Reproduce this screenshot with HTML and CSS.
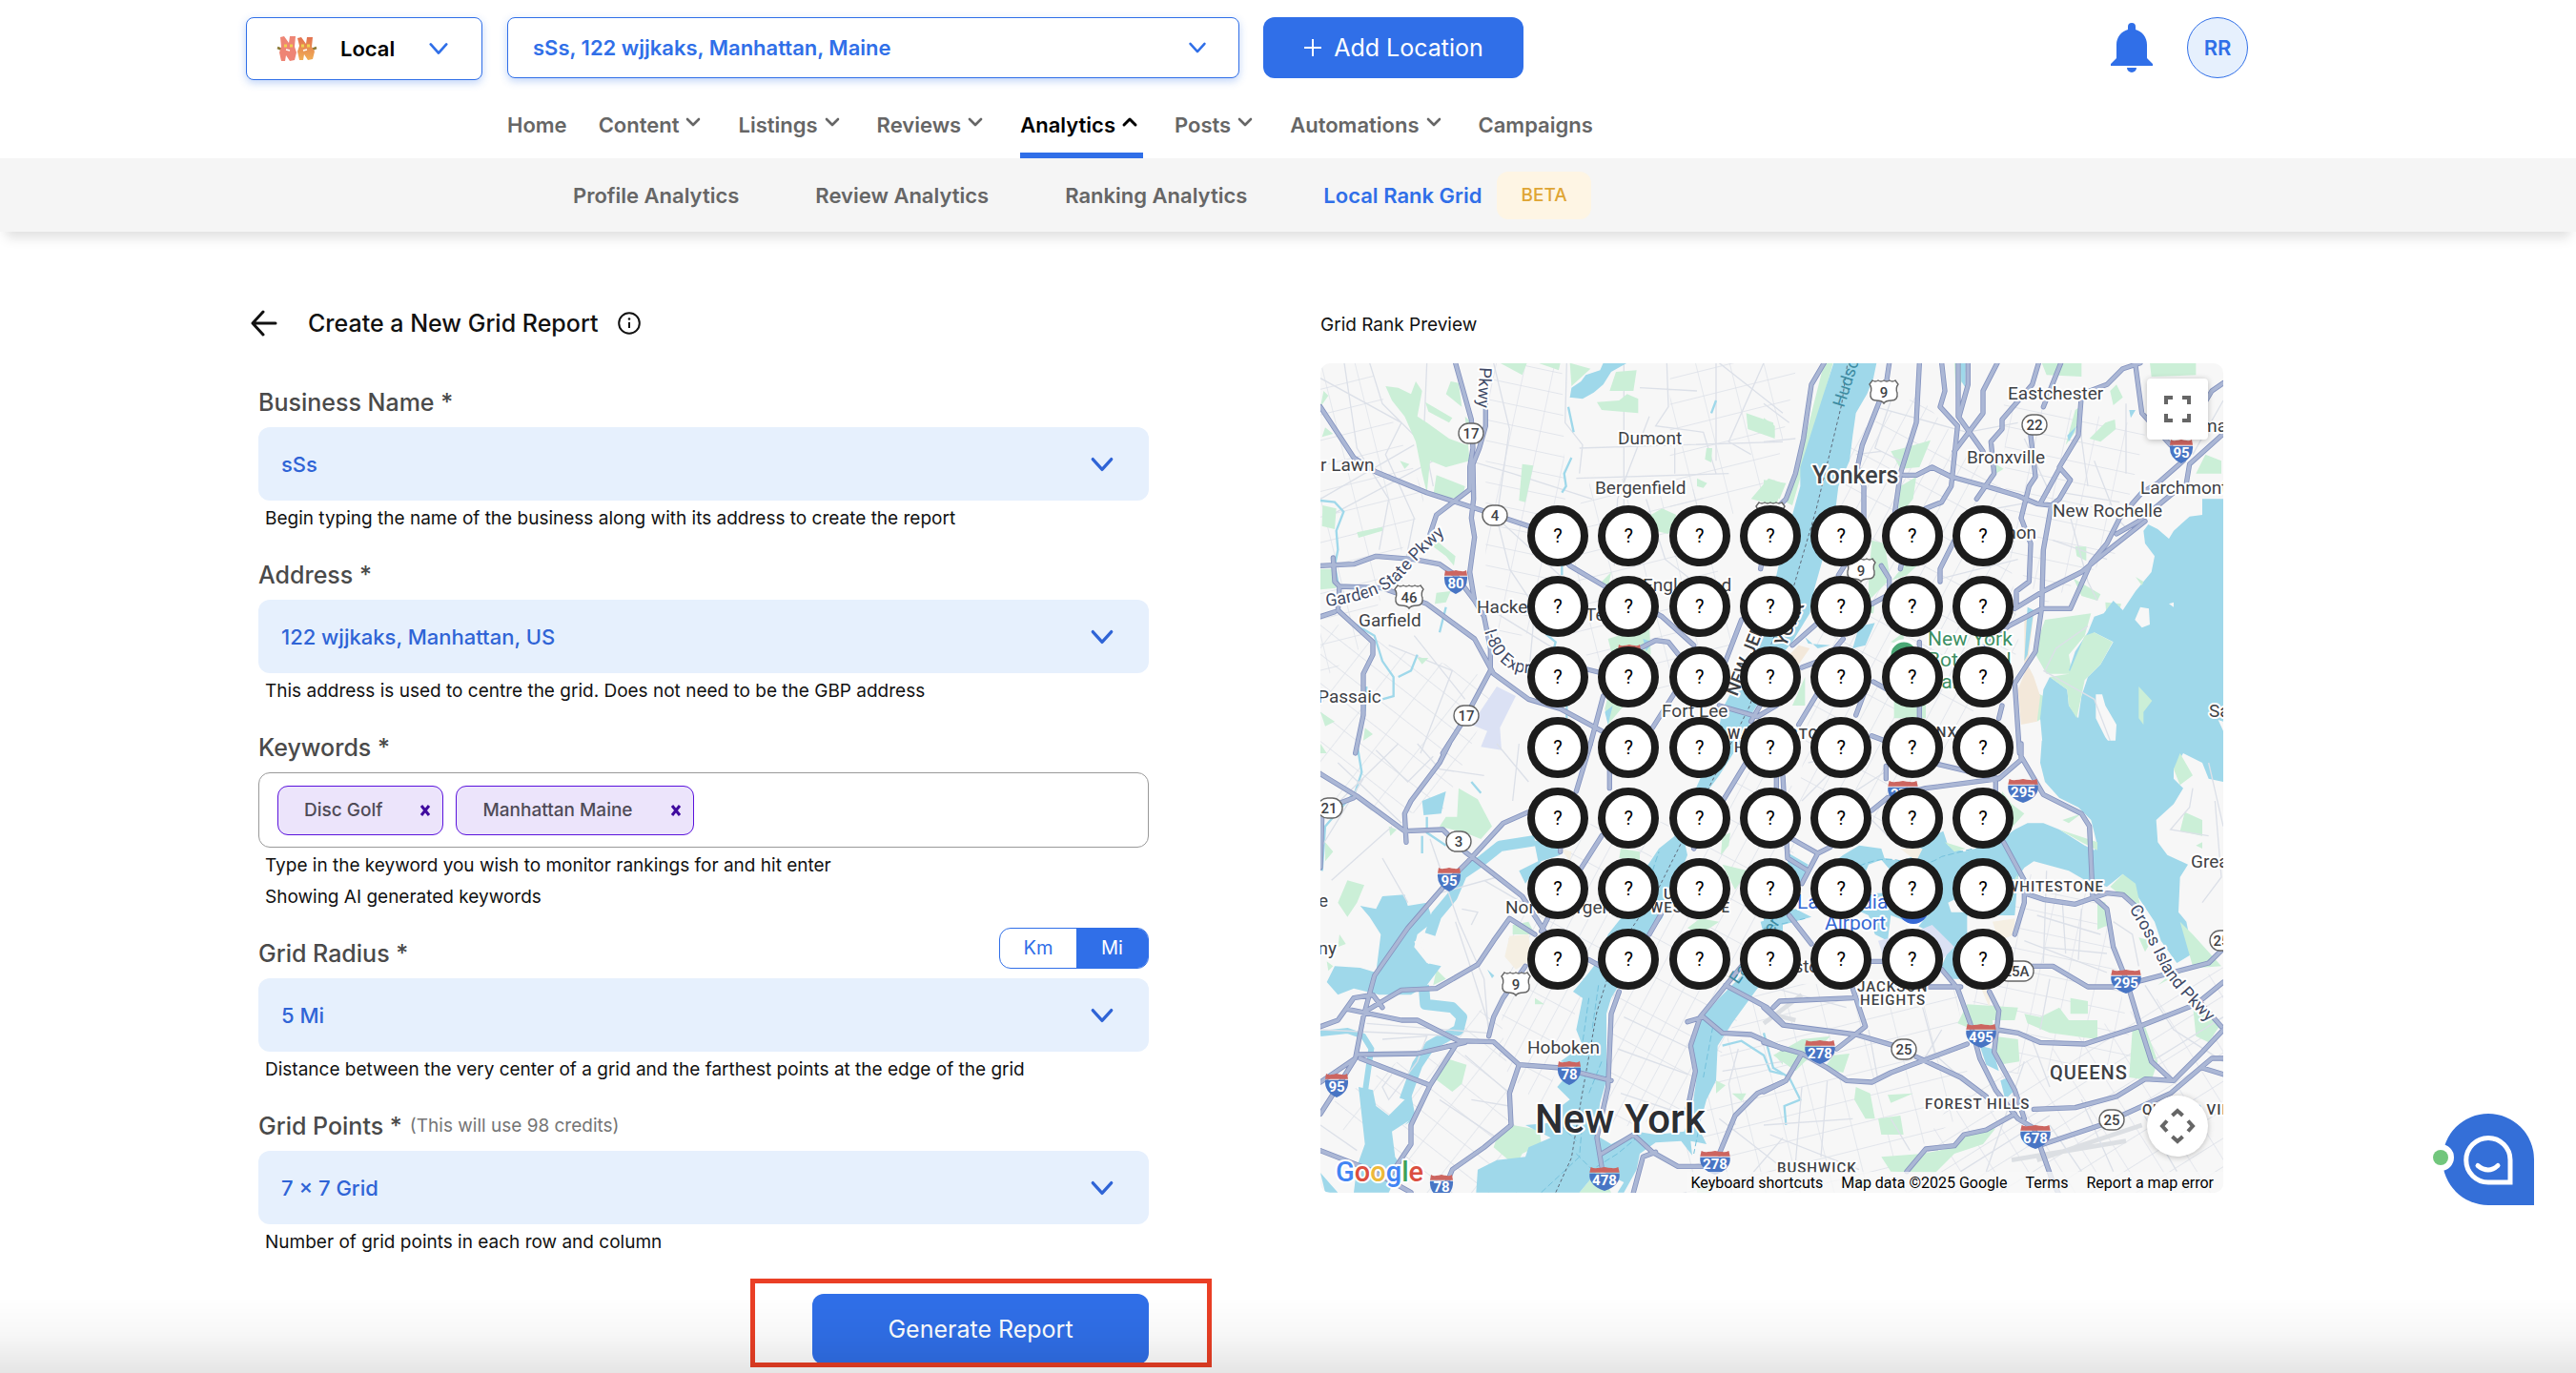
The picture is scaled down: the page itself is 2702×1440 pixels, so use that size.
FILE: index.html
```html
<!DOCTYPE html>
<html lang="en">
<head>
<meta charset="utf-8">
<meta name="viewport" content="width=device-width, initial-scale=1">
<title>Local Rank Grid</title>
<link rel="stylesheet" href="styles.css">
</head>
<body>
<svg class="defs" aria-hidden="true">
  <defs>
    <symbol id="chev" viewBox="0 0 24 24"><path d="M3 7l9 10 9-10" fill="none" stroke="currentColor" stroke-width="3" stroke-linecap="round" stroke-linejoin="round"/></symbol>
    <symbol id="mini" viewBox="0 0 27 27"><path d="M7 8l6 6 6-6" fill="none" stroke="currentColor" stroke-width="2.6" stroke-linecap="round" stroke-linejoin="round"/></symbol>
    <symbol id="mini-up" viewBox="0 0 27 27"><path d="M7 14l6-6 6 6" fill="none" stroke="currentColor" stroke-width="3" stroke-linecap="round" stroke-linejoin="round"/></symbol>
  </defs>
</svg>

<header class="top">
  <div class="top-row">
    <button class="workspace" type="button">
      <svg width="43" height="26" viewBox="0 0 43 26" aria-hidden="true">
        <defs><linearGradient id="fur" x1="0" y1="0" x2="0" y2="1"><stop offset="0" stop-color="#e2714f"/><stop offset="1" stop-color="#f0ae55"/></linearGradient></defs>
        <path d="M1 12l5 2M42 12l-5 2" stroke="#8b7a35" stroke-width="2.5"/>
        <path d="M4 1l4-1 5 7 1-7h6l-1 11 2 6-2 8-5 1-4-6-1 6-4 0-2-9 2-6z" fill="#ee8575"/>
        <path d="M22 2l4-1 5 7 1-7h6l-1 10 3 5-2 8-5 1-4-6-1 6-4 0-2-9 2-6z" fill="url(#fur)"/>
        <path d="M8 10h3m3 0h3m9 0h3m3 0h3" stroke="#efd24f" stroke-width="3"/>
        <path d="M10 14l4 1m14 0l4-1" stroke="#fff" stroke-width="1.5"/>
      </svg>
      <span>Local</span>
      <svg class="chev" width="22" height="22"><use href="#chev"/></svg>
    </button>
    <label class="location">
      <span class="sr">Location</span>
      <select><option>sSs, 122 wjjkaks, Manhattan, Maine</option></select>
      <svg class="chev" width="20" height="20"><use href="#chev"/></svg>
    </label>
    <button class="primary add" type="button"><svg width="20" height="20" viewBox="0 0 20 20" aria-hidden="true"><path d="M10 1v18M1 10h18" stroke="#fff" stroke-width="2"/></svg>Add Location</button>
    <button class="bell" type="button" aria-label="Notifications">
      <svg width="44" height="54" viewBox="0 0 44 54"><path d="M22 0a4 4 0 0 1 4 4v3c7 2 12 8 12 16v14l6 6v2H0v-2l6-6V23C6 15 11 9 18 7V4a4 4 0 0 1 4-4zM17 47h10a5 5 0 0 1-10 0z" fill="#306fe8"/></svg>
    </button>
    <button class="avatar" type="button">RR</button>
  </div>
  <nav class="main-nav" aria-label="Main">
    <a href="#">Home</a>
    <a href="#">Content<svg width="27" height="27"><use href="#mini"/></svg></a>
    <a href="#">Listings<svg width="27" height="27"><use href="#mini"/></svg></a>
    <a href="#">Reviews<svg width="27" height="27"><use href="#mini"/></svg></a>
    <a href="#" class="active">Analytics<svg width="27" height="27"><use href="#mini-up"/></svg></a>
    <a href="#">Posts<svg width="27" height="27"><use href="#mini"/></svg></a>
    <a href="#">Automations<svg width="27" height="27"><use href="#mini"/></svg></a>
    <a href="#">Campaigns</a>
  </nav>
</header>
<nav class="sub-nav" aria-label="Analytics">
  <a href="#">Profile Analytics</a>
  <a href="#">Review Analytics</a>
  <a href="#">Ranking Analytics</a>
  <a href="#" class="active">Local Rank Grid<span class="beta">BETA</span></a>
</nav>

<main class="content">
  <form class="report">
    <div class="report-head">
      <button type="button" class="icon-btn" aria-label="Back"><svg width="28" height="28" viewBox="0 0 28 28"><path d="M26 14H3M13 2L2 14l11 12" fill="none" stroke="#111" stroke-width="3" stroke-linecap="round" stroke-linejoin="round"/></svg></button>
      <h1>Create a New Grid Report</h1>
      <svg width="24" height="24" viewBox="0 0 24 24" aria-hidden="true"><circle cx="12" cy="12" r="10.8" fill="none" stroke="#111" stroke-width="2"/><path d="M12 11v6" stroke="#111" stroke-width="2"/><circle cx="12" cy="7.5" r="1.3" fill="#111"/></svg>
    </div>
    <div class="fields">
      <div class="field">
        <div class="label-row"><label for="business">Business Name *</label></div>
        <div class="select"><select id="business"><option>sSs</option></select><svg class="chev" width="26" height="26"><use href="#chev"/></svg></div>
        <p class="hint">Begin typing the name of the business along with its address to create the report</p>
      </div>
      <div class="field">
        <div class="label-row"><label for="address">Address *</label></div>
        <div class="select"><select id="address"><option>122 wjjkaks, Manhattan, US</option></select><svg class="chev" width="26" height="26"><use href="#chev"/></svg></div>
        <p class="hint">This address is used to centre the grid. Does not need to be the GBP address</p>
      </div>
      <div class="field">
        <div class="label-row"><label for="keywords">Keywords *</label></div>
        <div class="tags">
          <span class="tag">Disc Golf<button type="button" aria-label="Remove Disc Golf"><svg width="12" height="12" viewBox="0 0 12 12"><path d="M2 1l8 10M10 1L2 11" stroke="#3f0a9e" stroke-width="3"/></svg></button></span>
          <span class="tag">Manhattan Maine<button type="button" aria-label="Remove Manhattan Maine"><svg width="12" height="12" viewBox="0 0 12 12"><path d="M2 1l8 10M10 1L2 11" stroke="#3f0a9e" stroke-width="3"/></svg></button></span>
          <input id="keywords" type="text">
        </div>
        <p class="hint">Type in the keyword you wish to monitor rankings for and hit enter</p>
        <p class="hint">Showing AI generated keywords</p>
      </div>
      <div class="field">
        <div class="label-row">
          <label for="radius">Grid Radius *</label>
          <div class="units">
            <label><input type="radio" name="unit"><span>Km</span></label>
            <label><input type="radio" name="unit" checked><span>Mi</span></label>
          </div>
        </div>
        <div class="select"><select id="radius"><option>5 Mi</option></select><svg class="chev" width="26" height="26"><use href="#chev"/></svg></div>
        <p class="hint">Distance between the very center of a grid and the farthest points at the edge of the grid</p>
      </div>
      <div class="field">
        <div class="label-row"><label for="points">Grid Points *</label><span class="credits">(This will use 98 credits)</span></div>
        <div class="select"><select id="points"><option>7 × 7 Grid</option></select><svg class="chev" width="26" height="26"><use href="#chev"/></svg></div>
        <p class="hint">Number of grid points in each row and column</p>
      </div>
    </div>
    <div class="submit"><button class="primary generate" type="submit">Generate Report</button></div>
  </form>

  <section class="preview">
    <h2>Grid Rank Preview</h2>
    <div class="map">
      <svg class="layer" viewBox="0 0 2841 2610" preserveAspectRatio="xMidYMid slice" aria-hidden="true">
        <defs>
          <pattern id="s1" width="90" height="64" patternUnits="userSpaceOnUse" patternTransform="rotate(12)"><path d="M0 0H90M0 0V64" class="street"/></pattern>
          <pattern id="s2" width="46" height="110" patternUnits="userSpaceOnUse" patternTransform="rotate(28)"><path d="M0 0H46M0 0V110" class="street"/></pattern>
          <pattern id="s3" width="110" height="72" patternUnits="userSpaceOnUse" patternTransform="rotate(38)"><path d="M0 0H110M0 0V72" class="street"/></pattern>
          <pattern id="s4" width="104" height="78" patternUnits="userSpaceOnUse" patternTransform="rotate(-14)"><path d="M0 0H104M0 0V78" class="street"/></pattern>
          <pattern id="s5" width="90" height="76" patternUnits="userSpaceOnUse" patternTransform="rotate(-32)"><path d="M0 0H90M0 0V76" class="street"/></pattern>
          <g id="roads">
            <g transform="translate(-45 -213)"><path d="M45 350L150 510 220 555 380 620 550 675 700 725 830 850 940 915 1120 1010 1220 1100M470 212L520 390 525 480 515 540 515 610 410 690 390 750M565 340V410L545 480 525 530 527 640 520 700 530 760 515 870 530 960 560 1010 580 1110V1180L500 1330 430 1440M45 850L150 845 220 820 340 830 420 845 470 880 530 960M85 825L90 900 105 915 240 920 380 970 530 1080 590 1190 700 1270 800 1300 930 1370M105 915L100 990 210 1090V1130L180 1190V1320L155 1440M45 1010L90 995M895 1410L935 1260M860 1170L920 1185M1050 1110L1100 1085 1140 1090 1180 1140M1320 1150L1370 1020M1090 1360L1160 1250M1300 1290L1420 1325 1480 1290M1400 1340L1480 1200"/></g>
            <g transform="translate(1395 -213)"><path d="M190 212L150 280 125 450 100 560 70 640 20 690-10 860M395 212L385 280 310 470 295 540 315 600V700M490 212L480 400 430 560 410 700M430 860L450 770M560 212L570 300 555 350 610 410 590 600 560 650 510 670M612 212V380L690 490M643 212V280L615 380M735 212L690 300V370L600 490M865 212L845 280 750 390V420L715 460 725 560 670 640M935 212L880 350M840 440L855 570 835 600 810 700 840 780 835 900 795 930V980M440 565H480L530 540 590 570 700 600 800 630 860 655 905 660M1185 212L1130 230 1080 280 1000 310 990 440 930 540 965 580 930 640 905 660 880 800 875 980 855 1120 790 1220 805 1440M930 545L870 655M1170 220L1190 370 1280 470M1446 275L1410 300 1380 350M1446 435L1340 530 1330 590M1320 520L1240 590 1190 620 1120 700 1080 780 1030 840 965 985H875L770 1040 700 1100M1290 620L1180 710 1110 750M1200 710L1060 820 1000 870 880 930 790 985M370 850L395 890V940L340 970M235 880L260 840M600 770L555 860V900M170 1030L90 1100M250 1080L200 1140 120 1170M170 1250L110 1350M320 1240L290 1320M345 1215L390 1240M340 1385L380 1400M740 1330L750 1290M490 1090V1330"/></g>
            <g transform="translate(-45 1197)"><path d="M45 95L160 165 310 275 430 270 500 340 590 410 680 480 750 590M450 0L420 60 330 180 310 220 315 310M700 215L620 250 510 370 450 430 320 580 215 730 180 860 155 990 80 1110 45 1165M155 990L45 1065M110 185L150 170M45 390L50 230M45 890L100 870 150 800 210 790 240 830M190 840L300 775 410 770 540 695 590 620 640 550 720 600M130 835L300 870H350L480 935 590 938 670 1010 800 1020 960 1060M160 978L350 975 500 940M170 990L390 1075 470 950M390 1075L330 1200V1260L270 1350M45 1280L200 1340 330 1412M690 700L620 800 590 860 575 920M670 1010L640 1100 645 1200 560 1270 460 1340 430 1412M890 680L980 730M985 780L960 850 950 1080 915 1240 930 1330M740 590L800 470M800 340V260M850 150L895 0M930 290L860 400M955 80V140M1080 600L1160 460M1220 330L1390 50M930 1290L1030 1230 1090 1285 1170 1330H1250M1030 1412L1060 1300 1100 1285M1300 1290L1350 1170 1420 1100 1500 1065M1370 700L1240 860 1210 950 1225 1030 1200 1150M1200 875L1250 860 1310 910 1400 915 1500 960M1320 760L1450 830 1500 880"/></g>
            <g transform="translate(1395 1197)"><path d="M0 940L120 975 200 1020 260 1060 340 1065 400 1035 640 945M120 975L70 1060 0 1095M0 830L60 885 290 915 410 950M30 830L50 810 280 800M280 770L320 890 230 960M80 540L150 630M60 100L75 360 140 400M40 100V140M90 300L170 345 210 325M170 345L120 440M340 210L390 170 510 140 740 110 810 50V0M550 65L740 110M810 40L880 160 1000 220 1025 260 1035 480 1080 520 1100 640 1140 740 1185 890 1220 1000 1280 1055M730 120V160M755 310L820 430V500L790 600M820 470L880 490 980 505 1080 470 1130 475 1180 520M840 700H910L1020 765H1100L1190 745 1400 690 1446 645M340 685H380M560 710L610 770 650 880 680 990 730 1090 800 1180 850 1210 910 1380 930 1420M710 780L740 840 725 970 790 1090 820 1180M520 765H620M735 900L800 910 870 940 1010 945 1180 890 1360 820 1446 750M1370 810L1440 890M1446 900L1380 970 1290 1060 1200 1055 1110 1110 980 1145 850 1150M1446 990H1410L1280 1100 1060 1200 880 1260M1380 1020L1446 1040M480 985L620 1050 700 1110M790 1165L700 1215 630 1230 600 1265 510 1275 450 1346M385 70V110"/></g>
          </g>
        </defs>
        <rect width="2841" height="2610" fill="#f7f7f7"/>
        <!-- local street grids -->
        <path d="M0 0H150L330 420 120 900 0 1000zM1100 0L1500 0 1420 420 1100 560z" fill="url(#s4)"/>
        <path d="M0 800L250 900 560 1000 380 1420 0 1400zM0 2350L560 2000 640 2610H300z" fill="url(#s3)"/>
        <path d="M520 0L760 0 780 800 520 900z" fill="url(#s1)"/>
        <path d="M860 350L1200 400 1300 900 950 1100 700 700z" fill="url(#s4)"/>
        <path d="M1380 1200L1500 1350 1480 1700 1180 2350 880 2420 920 1960z" fill="url(#s2)"/>
        <path d="M600 1700L900 1400 1100 1450 850 1900 700 2350 560 2200z" fill="url(#s2)"/>
        <path d="M1640 250L1880 100 2150 400 2200 900 1750 1500 1500 1400z" fill="url(#s2)"/>
        <path d="M2150 100L2600 200 2500 600 2280 760 2160 600z" fill="url(#s1)"/>
        <path d="M2200 1600L2460 1660 2560 2200 2150 2240 2050 2000z" fill="url(#s1)"/>
        <path d="M1350 1950L2000 1960 2050 2340 1700 2610H1100L1250 2200z" fill="url(#s4)"/>
        <path d="M2000 2300L2841 1900V2610H1800z" fill="url(#s5)"/>
        <g transform="translate(-45 -213)">
          <path class="street" d="M45 260L300 400 250 500 340 700 300 900M200 212L240 340 380 480 650 560 900 640M45 640L340 470M60 700L400 520M120 212L160 480 260 640 230 800M380 212L370 450 400 600M590 212L640 420 600 700 640 860 720 980 700 1200M820 212L815 400 870 470 860 560M1050 290L1230 300M1135 212L1140 350 1100 410 1250 430 1290 560M1290 212V520M860 480L1500 460M1000 212V700M1160 480V560M850 575L1330 560M1440 212L1330 460 1400 500M1080 380L980 640 970 850M1300 212L1500 370M1070 640L1130 830 1220 900M600 1000L860 1160M340 1070L500 1270M260 1100L460 1180 360 1440M600 700L820 900"/>
          <path class="green" d="M250 285L290 290 330 310 345 270 365 300 350 380 380 400 450 450 505 470 520 400 500 380 515 520 440 540 390 520 380 620 365 560 345 460 310 380 270 330zM375 335L460 385 450 400 385 365zM455 270L480 275 490 350 440 310zM410 565L500 600 490 640 400 630zM680 530L715 535 690 650 670 645zM295 520L325 530 310 545zM160 745L240 728 240 740 165 762zM52 660L95 670 90 735 50 725zM390 755L470 820 465 850 440 820 400 790zM45 860L90 860 95 920 45 925zM410 935L455 930 440 965 405 970zM610 212L695 212 680 250zM730 212L800 212 795 235zM830 212L895 230 835 285zM975 240L1040 235 1030 300 955 300zM915 335L985 330 1010 310 1045 325 1045 370 930 360zM1385 370L1470 400 1475 450 1390 420zM1260 480L1278 480 1275 525 1255 515zM1230 575L1262 590 1250 605 1230 600zM1455 575L1500 590 1480 660 1400 640zM1085 690L1120 670 1165 690 1140 750 1100 740zM960 870L950 920 930 900zM950 1080L1080 1040 1085 1130 960 1120zM350 1140L385 1140 365 1160zM185 1360L210 1380 180 1400zM45 1310L90 1340 60 1355zM45 1410L65 1440 45 1440zM960 1220L1000 1290 950 1350 940 1300zM60 415L85 435 50 445zM55 300L70 315 45 350z"/>
          <path fill="#dbe1f4" d="M600 1230L660 1260 610 1360 615 1430 550 1420 570 1370 520 1350z"/>
          <path class="water" d="M835 290L865 270 880 250 925 235 935 212H1010L960 240 935 280 905 305 870 325 830 320 822 370zM1060 1080L1090 1090 1070 1120zM940 1310L965 1290 950 1350z"/>
          <path class="river" d="M825 350L842 430M835 510L812 560 818 600 805 620M805 850V880M755 1065L785 1090 780 1110M1290 330L1275 370M45 645L90 650 118 680 95 740 100 800 90 850 105 930 100 980 130 1020 215 1070 240 1150 275 1200V1260L240 1270M190 1230L185 1300 155 1440M350 1130L330 1180 290 1200M440 980L420 1060M820 1290V1330"/>
        </g>
        <g transform="translate(1395 -213)">
          <path class="green" d="M190 212H218L160 420 90 660 70 650 130 450zM0 385L35 410 35 445 0 425zM0 580L70 590 50 640 0 620zM600 212H645L605 320zM400 490L440 480 525 455 490 540 430 545zM430 600L480 570 470 640 420 700zM875 212L1000 212 1000 255 890 250zM1215 212H1360V250L1220 255zM1075 400L1105 390 1108 420 1060 460 1025 450zM980 360L995 350 980 430 950 470zM1090 300L1110 280 1130 320 1100 345zM340 770L380 780 400 900 480 800 560 780 450 880 390 900 330 960 330 900zM160 930L240 880 260 990zM980 790L1015 790V835L985 820zM975 890L1060 940 1050 960 1000 945zM885 1020L1030 1000 1010 1070 960 1130 970 1190 890 1190 850 1120zM1390 500L1440 520 1440 560 1360 560zM730 530L755 545 730 560zM1075 965L1125 970 1110 1020 1080 1025zM310 960L350 960 345 1000 310 1000zM410 1250L510 1250V1330H410zM860 1250L900 1270 890 1320 860 1340zM90 1290L130 1200 130 1290zM400 1090L440 1060 440 1100z"/>
          <path fill="#f3e8da" d="M820 1010L850 1000 830 1160 850 1200 870 1260 860 1340 810 1350 800 1240 820 1190zM80 1130L110 1100 145 1110 110 1160z"/>
          <path class="water" d="M220 212H355L345 260 325 310 290 370 280 440 270 520 235 600 225 680 205 760 180 850 160 920 145 1000 90 1090 40 1150 20 1220-40 1320-60 1415-150 1415-130 1300-60 1170 0 1050 20 950 40 880 60 790 90 690 115 600V540L150 430 185 320zM1446 640H1380V690L1340 695 1290 740 1275 765 1240 735 1210 720 1195 740 1200 780 1230 820 1220 870 1170 930 1150 960 1130 990 1100 960 1070 1000 1040 1010 1020 1060 980 1120 960 1180 990 1190 1040 1060 1100 1090 1060 1160 1020 1200 1000 1260 990 1330 960 1290 955 1240 900 1200 880 1240 870 1330 880 1440H1446zM620 212H635V290L622 270zM280 1110L300 1040 350 1030 320 1100zM830 980L850 990 830 1130 820 1150zM955 440L985 410 960 460zM1150 360L1170 360 1155 385zM130 1075L140 1095 210 1100 170 1110zM150 1280L165 1250 110 1350z"/>
          <path fill="#f7f7f7" d="M1185 980L1212 985 1215 1035 1190 1045 1168 1020zM1275 970L1290 965 1290 980zM1045 1255L1065 1255 1075 1290 1110 1350 1105 1430 1075 1390 1045 1330zM1446 1340L1430 1335 1446 1370z"/>
          <path class="green" d="M1180 1230L1222 1275 1195 1310 1195 1350 1180 1330zM1040 1060L1098 1090 1060 1160 1010 1210 985 1330 960 1290 955 1240 900 1200 960 1190 1010 1070zM1170 885L1195 900 1190 912z"/>
          <path class="street" d="M0 340L80 400M1446 330L1350 500M370 490L290 500M350 350L640 430 800 400M1000 340V450L1020 600M1140 340V560M940 620L1120 650M910 770L1080 830M820 450L900 620M1040 520L1110 700 1150 740M960 680L1020 900 1050 960M0 460L100 450M400 330L350 480 430 520M620 690L840 650M560 890L800 830M600 950L790 1000M880 1180L1040 1270 1090 1400M1020 1040L920 1110 885 1180"/>
        </g>
        <g transform="translate(-45 1197)">
          <path class="green" d="M480 140L540 175 585 260 550 300 500 280 420 260 440 230 475 230zM400 185L420 200 400 205zM130 430L183 445 160 500 130 545 100 500zM60 310L85 340 60 370zM105 600L125 630 100 640zM65 685L85 700 70 715zM410 710L440 740 400 760zM650 570L700 560 720 600 650 600zM440 990L505 1010 490 1070 460 1095 400 1050zM600 1240L650 1200 735 1215 740 1260 680 1290 660 1330 590 1270zM990 330L1050 340 1050 370 985 360zM1310 380L1390 400 1350 460zM1200 580L1240 550 1300 560 1240 600zM1310 290L1335 280 1330 320 1305 350zM260 260L285 270 265 290zM720 800L750 820 720 820zM1340 1100L1385 1100 1370 1125zM1290 1060L1320 1075 1290 1100zM1475 980L1500 960V1010zM860 1412L920 1340 960 1412zM1230 1380h40v32h-40z"/>
          <path fill="#f5efe3" d="M640 605L700 600 710 680 660 710 625 670zM800 330L835 340 830 370z"/>
          <path class="water" d="M170 510L220 520 240 480 310 475 320 510 380 500 400 560 350 600 340 640 380 690 425 700 380 760 330 790 230 790 150 770 100 790 65 750 90 700 170 705 220 720 235 600 200 545zM165 1080L210 1090 220 1140 260 1170 330 1100 345 1180 310 1200 325 1185 270 1220 280 1300 300 1330 260 1412H150L160 1330 185 1260zM45 1350L80 1390 100 1412H60z"/>
          <path class="water" d="M700 300L790 320 800 350 740 370 690 440 670 400 730 370 720 320zM570 710L592 730 585 738zM365 180L440 150 425 220 370 225zM1180 260L1300 100 1370-10H1280L1240 110 1160 290 1110 330 1070 390 1060 440 990 550 950 600 920 680 890 720 840 780 870 800 850 900 870 950 800 1000 850 1010 790 1080 830 1120 790 1150 800 1190 690 1200 770 1240 700 1270 690 1300 600 1310 540 1340 535 1412H860L920 1340 1000 1380 980 1412H1000L1040 1340 1050 1290 1100 1255 1180 1250 1215 1295 1210 1250 1260 1260 1235 1210 1260 1120 1290 1060 1295 950 1340 880 1420 770 1500 690V540L1430 560 1440 600 1480 620 1380 720 1300 800 1230 880 1215 950 1230 1040 1215 1150 1190 1220 1100 1230 1040 1220 960 1260 910 1230 925 1130 945 1060V850L960 800 990 750 1000 700 1080 600 1120 550 1150 480 1200 350z"/>
          <path class="inlet" d="M720 305L610 322 550 370 490 410 460 480 410 540 390 600M370 760L375 820 460 830 490 860 480 900 390 950 350 1010 310 1120"/>
          <path d="M45 912L130 903 180 920 205 960 185 1100" fill="none" stroke="#9fd8ea" stroke-width="18"/>
          <path d="M345 620L390 690M360 600L400 660" fill="none" stroke="#f7f7f7" stroke-width="12"/>
          <path class="river" d="M160 0L175 90 155 150 60 260 50 400M520 120L550 155M380 230L380 280 440 320M365 290V345M1310 950L1370 935 1440 980 1460 1030 1500 1040"/>
          <path class="wake" d="M1240 1190L1220 1290M890 800L870 940M920 760L900 900M850 1290L900 1340 980 1290 1040 1240M1280 890L1250 1050M740 1412L860 1300M800 1200L850 1250M1090 400L1110 340M930 1000L890 1100M870 1180L860 1300"/>
          <path class="street" d="M45 240L290 0M45 330L180 110M100 60L300 250M220 20L320 120 400 40M80 430L270 260M390 300L480 560 560 740 575 920M470 560L510 680 580 900M240 360L320 500M420 470L600 420M560 430L680 500M490 520L540 530 520 570M350 0L420 80 560 100M600 0L700 120M650 180L670 0M45 900L480 920M190 880L570 910M240 930L380 920 350 1000 260 1120 240 1080 270 1040M45 1200L160 1280M500 980L640 1100M520 1120L640 1140M420 1120L600 1240M990 1100L1200 1170M1000 860L1210 960M980 960L1200 1040M1310 1030L1500 1000M1300 1180L1480 1320M1380 1380L1500 1240M1360 960L1330 1070 1350 1200"/>
        </g>
        <g transform="translate(1395 1197)">
          <path class="water" d="M875-10L870 60 885 120 930 170 990 200 1030 240 1050 320 1040 335 1010 320 930 270 880 250 830 250 790 270 750 300 700 320 630 340 580 320 565 275 510 300 480 350 430 370 380 360 370 330 300 320 250 350 170 410 200 430 180 480 240 500 330 540 350 600 390 620 400 540 480 570 590 630 560 700 590 740 620 740 600 690 640 620V540L790 540 800 420 820 390 850 370 960 400 1030 440 1040 440 1080 450 1130 410 1170 470 1230 560 1250 620 1300 690 1350 660 1330 560 1305 530 1310 420 1335 380 1270 350 1240 310 1235 240 1290 190 1320 140 1290 110V80L1320 30 1380 60 1400 110 1446 120V-10zM70 340L140 380 120 440 80 400zM0 600L60 570 150 545 100 520 0 540zM680 950L720 960 740 1030 700 1010zM745 1060L770 1050 790 1090 760 1120z"/>
          <path fill="#f7f7f7" d="M330 380L370 365 400 400 390 470 340 470 310 430zM580 500L640 470 640 530 590 530z"/>
          <path fill="#dbe1f4" d="M360 620L480 590 530 570 600 640 560 680 380 680z"/>
          <path fill="#f5efe3" d="M720 560L790 550V600L740 620zM430 330L500 330 480 370zM680 760L715 770 710 830z"/>
          <path class="green" d="M750 150L780 190 820 220 780 265 740 240zM930 270L1050 310 1050 335 1000 310zM1130 410L1170 440 1185 510 1140 490 1090 450zM1325 215L1380 240 1380 290 1310 275zM1310 30L1350 100 1310 130 1290 80zM640 820L800 830 790 870 720 870 725 920 800 930 805 1000 740 1010 720 900 660 900 610 880zM820 850L870 860 930 830 960 870 1050 870 1050 930 900 910 830 880zM965 800L1020 810V850H965zM1050 490L1075 500 1085 570 1050 585zM1310 560L1350 600 1440 700 1300 710 1240 760 1350 700zM1350 820L1440 880 1400 940 1360 920zM1160 900L1200 890 1240 1000 1220 1060 1150 1050zM290 1080L335 1100 350 1180 320 1180 285 1120zM390 1105L470 1100 400 1130zM360 1180L430 1170 440 1230 370 1230zM370 1300L500 1290 600 1270 640 1230 730 1210 690 1260 600 1290 540 1350 400 1346zM30 980L120 930 210 920 100 1030zM220 980L270 975 250 1035 190 1020zM1360 320L1380 310 1380 330zM1180 610L1220 620 1200 655zM780 500L800 410 780 440zM270 1370h60v20h-60zM570 310L635 330 600 340zM1000 220L960 250 940 240z"/>
          <path class="river" d="M0 910L30 1020 80 1050 115 1120 65 1140 70 1200"/>
          <path class="wake" d="M300 385Q380 350 440 372T560 355L660 330M0 580L130 550"/>
          <path d="M0 880L120 790M860 1310L1190 1200M780 1310L1140 1250M20 850L100 870" fill="none" stroke="#dcdfe3" stroke-width="14"/>
          <path class="street" d="M120 180L240 60M180 220L380 90M340 240L400 300M140 60L320 20M1350 140L1340 200 1280 270 1400 290M1420 180L1440 420 1380 500M1400 60L1446 260M840 440L1020 440M860 540L1060 600M880 640L1080 660M820 620L1080 720M890 400L880 690M940 500L950 660M1000 520L990 680M0 760L260 830M0 1200L280 1180M120 1080L100 1320M200 1060L180 1300M330 900L360 1060M500 830L540 980 620 1050M560 900L500 1000M20 1230L300 1340M400 1180L460 1280M840 920L900 1080M900 740L870 900M1100 560L1160 600 1180 700M1200 760L1290 900 1446 1000M1220 1000L1446 860M620 1346L900 1170M900 1200L1000 1346M1000 1120L1100 1346M1180 1140L1300 1346M820 1000L700 1346"/>
        </g>
        <path class="ferry" d="M1660 -10L1640 130 1560 460 1490 700 1420 880 1350 1080 1245 1290 1150 1480 1060 1660 930 1850 870 2040 820 2320 790 2500 740 2610"/>
        <use href="#roads" class="road-case"/>
        <use href="#roads" class="road-fill"/>
      </svg>

      <svg class="layer labels" viewBox="0 0 947 870" preserveAspectRatio="xMidYMid slice">
        <defs>
          <symbol id="oval" viewBox="0 0 28 24"><rect x="1" y="1" width="26" height="21" rx="10.5" fill="#fff" stroke="#666" stroke-width="1.4"/></symbol>
          <symbol id="us" viewBox="0 0 32 28"><path d="M4 2q3 2 6 0q3 2 6 0q3 2 6 0q3 2 6 0l3 4q-3 4-1 9q1 8-6 8q-6 0-8 3q-2-3-8-3q-7 0-6-8q2-5-1-9z" fill="#fff" stroke="#666" stroke-width="1.4"/></symbol>
          <symbol id="int" viewBox="0 0 26 28" preserveAspectRatio="none"><path d="M2 1q3 2 5 1q3 0 6-1q3 1 6 1q2 1 5-1l1 6H1z" fill="#cc6560"/><path d="M1 8h24q1 13-12 19Q0 21 1 8z" fill="#4875c4"/></symbol>
          <path id="gsp" d="M6 255Q66 248 88 222T130 180"/>
          <path id="i80" d="M172 281Q184 322 215 325T270 332"/>
          <path id="cross" d="M848 572Q870 608 880 630T930 690"/>
        </defs>
        <g class="town">
          <text x="312" y="85">Dumont</text><text x="288" y="137">Bergenfield</text><text x="0" y="113">r Lawn</text>
          <text x="40" y="276">Garfield</text><text x="164" y="262">Hackensack</text><text x="338" y="239">Englewood</text>
          <text x="278" y="270">Teaneck</text><text x="-3" y="356">Passaic</text><text x="358" y="371">Fort Lee</text>
          <text x="721" y="38">Eastchester</text><text x="678" y="105">Bronxville</text><text x="860" y="137">Larchmont</text>
          <text x="768" y="161">New Rochelle</text><text x="751" y="184" text-anchor="end">Mt Vernon</text><text x="924" y="72">ma</text>
          <text x="932" y="371">Sands Point</text><text x="8" y="570" text-anchor="end">Orange</text><text x="17" y="620" text-anchor="end">Kearny</text>
          <text x="194" y="577">North Bergen</text><text x="217" y="724">Hoboken</text><text x="913" y="529">Great Neck</text>
          <text x="484" y="639">Astoria</text>
        </g>
        <text class="city" x="516" y="126">Yonkers</text>
        <text class="metro" x="225" y="807">New York</text>
        <text class="borough" x="765" y="751">QUEENS</text>
        <g class="area">
          <text x="427" y="394">WASHINGTON</text><text x="434" y="408">HEIGHTS</text><text x="668" y="392" text-anchor="end">BRONX</text>
          <text x="360" y="562">UPPER</text><text x="346" y="576">WEST SIDE</text><text x="822" y="554" text-anchor="end">WHITESTONE</text>
          <text x="563" y="659">JACKSON</text><text x="566" y="673">HEIGHTS</text><text x="634" y="782">FOREST HILLS</text>
          <text x="862" y="788">QUEENS VILLAGE</text><text x="479" y="849">BUSHWICK</text>
        </g>
        <g class="state"><text transform="translate(437 350) rotate(-68)">NEW JERSEY</text><text transform="translate(488 298) rotate(-66)">YORK</text></g>
        <g class="stream"><text transform="translate(549 47) rotate(-72)">Hudson River</text><text transform="translate(438 652) rotate(-56)">East River</text></g>
        <g class="park"><circle cx="612" cy="306" r="15" fill="#4aa876" stroke="#fff" stroke-width="3"/><text x="637" y="296">New York</text><text x="637" y="318">Botanical</text><text x="637" y="341">Garden</text></g>
        <g class="airport"><path d="M604 575l18 22 18-22z" fill="#fff"/><circle cx="622" cy="572" r="16" fill="#3568d4"/><text x="500" y="572">LaGuardia</text><text x="529" y="594">Airport</text></g>
        <g class="roadname">
          <text><textPath href="#gsp">Garden State Pkwy</textPath></text>
          <text><textPath href="#i80">I-80 Express</textPath></text>
          <text><textPath href="#cross">Cross Island Pkwy</textPath></text>
          <text transform="translate(167 4) rotate(93)">Pkwy</text>
        </g>
        <g class="num">
          <use href="#oval" x="144" y="62" width="28" height="24"/><text x="158" y="79">17</text>
          <use href="#oval" x="169" y="148" width="28" height="24"/><text x="183" y="165">4</text>
          <use href="#oval" x="139" y="358" width="28" height="24"/><text x="153" y="375">17</text>
          <use href="#oval" x="-4" y="455" width="28" height="24"/><text x="9" y="472">21</text>
          <use href="#oval" x="131" y="490" width="28" height="24"/><text x="145" y="507">3</text>
          <use href="#oval" x="735" y="53" width="28" height="24"/><text x="749" y="70">22</text>
          <use href="#oval" x="598" y="708" width="28" height="24"/><text x="612" y="725">25</text>
          <use href="#oval" x="816" y="782" width="28" height="24"/><text x="830" y="799">25</text>
          <use href="#oval" x="932" y="594" width="28" height="24"/><text x="945" y="611">25</text>
          <rect x="711" y="627" width="37" height="21" rx="10" fill="#fff" stroke="#666" stroke-width="1.4"/><text x="730" y="643">25A</text>
          <use href="#us" x="77" y="231" width="32" height="28"/><text x="93" y="251">46</text>
          <use href="#us" x="575" y="16" width="32" height="28"/><text x="591" y="36">9</text>
          <use href="#us" x="551" y="203" width="32" height="28"/><text x="567" y="223">9</text>
          <use href="#us" x="189" y="637" width="32" height="28"/><text x="205" y="657">9</text>
          <use href="#us" x="456" y="144" width="32" height="28"/>
        </g>
        <g class="inum">
          <use href="#int" x="129" y="216" width="26" height="27"/><text x="142" y="236">80</text>
          <use href="#int" x="311" y="294" width="26" height="27"/>
          <use href="#int" x="890" y="79" width="26" height="27"/><text x="903" y="99">95</text>
          <use href="#int" x="122" y="528" width="26" height="27"/><text x="135" y="548">95</text>
          <use href="#int" x="4" y="744" width="26" height="27"/><text x="17" y="764">95</text>
          <use href="#int" x="248" y="731" width="26" height="27"/><text x="261" y="751">78</text>
          <use href="#int" x="114" y="850" width="26" height="27"/><text x="127" y="869">78</text>
          <use href="#int" x="397" y="825" width="34" height="27"/><text x="414" y="845">278</text>
          <use href="#int" x="281" y="842" width="34" height="27"/><text x="298" y="862">478</text>
          <use href="#int" x="594" y="437" width="34" height="27"/><text x="611" y="457">278</text>
          <use href="#int" x="720" y="435" width="34" height="27"/><text x="737" y="455">295</text>
          <use href="#int" x="828" y="635" width="34" height="27"/><text x="845" y="655">295</text>
          <use href="#int" x="676" y="692" width="34" height="27"/><text x="693" y="712">495</text>
          <use href="#int" x="507" y="709" width="34" height="27"/><text x="524" y="729">278</text>
          <use href="#int" x="733" y="798" width="34" height="27"/><text x="750" y="818">678</text>
        </g>
        <text class="google" x="16" y="858"><tspan fill="#4285f4">G</tspan><tspan fill="#db4f40">o</tspan><tspan fill="#edb93a">o</tspan><tspan fill="#4285f4">g</tspan><tspan fill="#3da25a">l</tspan><tspan fill="#db4f40">e</tspan></text>
      </svg>

      <div class="pins">
        <span>?</span><span>?</span><span>?</span><span>?</span><span>?</span><span>?</span><span>?</span>
        <span>?</span><span>?</span><span>?</span><span>?</span><span>?</span><span>?</span><span>?</span>
        <span>?</span><span>?</span><span>?</span><span>?</span><span>?</span><span>?</span><span>?</span>
        <span>?</span><span>?</span><span>?</span><span>?</span><span>?</span><span>?</span><span>?</span>
        <span>?</span><span>?</span><span>?</span><span>?</span><span>?</span><span>?</span><span>?</span>
        <span>?</span><span>?</span><span>?</span><span>?</span><span>?</span><span>?</span><span>?</span>
        <span>?</span><span>?</span><span>?</span><span>?</span><span>?</span><span>?</span><span>?</span>
      </div>
      <button class="map-btn full" type="button" aria-label="Full screen"><svg width="28" height="28" viewBox="0 0 28 28"><path d="M2 9V2h7M19 2h7v7M26 19v7h-7M9 26H2v-7" fill="none" stroke="#666" stroke-width="4"/></svg></button>
      <button class="map-btn camera" type="button" aria-label="Map camera controls"><svg width="38" height="38" viewBox="0 0 38 38"><path d="M13.500 8l5.500-5 5.500 5M13.500 30l5.500 5 5.500-5M8 13.500L3 19l5 5.500M30 13.500l5 5.500-5 5.500" fill="none" stroke="#666" stroke-width="4"/></svg></button>
      <div class="credits-bar"><button type="button">Keyboard shortcuts</button><span>Map data ©2025 Google</span><a href="#">Terms</a><a href="#">Report a map error</a></div>
    </div>
  </section>
</main>

<button class="chat" type="button" aria-label="Open chat">
  <svg width="106" height="96" viewBox="0 0 106 96">
    <path d="M58 0a48 48 0 0 1 48 48v48H58A48 48 0 0 1 58 0z" fill="#346fd8"/>
    <circle cx="8" cy="46" r="14" fill="#fff"/><circle cx="8" cy="46" r="8" fill="#71c67c"/>
    <path d="M58 25.500a23 23 0 0 1 23 23V72H58a23.200 23.200 0 0 1 0-46.500z" fill="none" stroke="#fff" stroke-width="5"/>
    <path d="M47 54.500q11 9 21 0" fill="none" stroke="#fff" stroke-width="5" stroke-linecap="round"/>
  </svg>
</button>
<div class="page-fade"></div>
</body>
</html>
```
FILE: styles.css
```css
* { box-sizing: border-box; }
body {
  margin: 0;
  min-height: 100vh;
  background: #fff;
  color: #111;
  font-family: Inter, "Liberation Sans", sans-serif;
  font-size: 22px;
  overflow-x: hidden;
}
button, select, input { font: inherit; color: inherit; margin: 0; }
button { border: 0; padding: 0; background: none; cursor: pointer; }
a { color: inherit; text-decoration: none; }
h1, h2, p { margin: 0; }
svg { flex: none; }
.defs { position: absolute; width: 0; height: 0; }
.sr { position: absolute; width: 1px; height: 1px; overflow: hidden; clip-path: inset(50%); }
.chev { color: #306fe8; pointer-events: none; }

/* header */
.top-row { display: flex; align-items: flex-start; padding: 18px 344px 0 258px; height: 90px; }
.workspace {
  display: flex; align-items: center;
  width: 248px; height: 66px; padding: 0 34px 0 31px; margin-right: 26px;
  border: 1px solid #306fe8; border-radius: 8px; background: #fff;
  box-shadow: 0 3px 8px rgba(48, 111, 232, .3);
  color: #000; font-weight: 600;
}
.workspace span { margin: 0 auto 0 24px; }
.location { position: relative; width: 768px; height: 64px; margin-right: 25px; }
.location select {
  width: 100%; height: 100%; padding: 0 60px 0 26px; appearance: none;
  border: 1px solid #306fe8; border-radius: 8px; background: #fff;
  box-shadow: 0 3px 8px rgba(48, 111, 232, .3);
  color: #306fe8; font-weight: 600;
}
.location .chev { position: absolute; right: 34px; top: 22px; }
.primary { border-radius: 12px; background: #306fe8; color: #fff; font-size: 25px; }
.add { display: flex; align-items: center; justify-content: center; gap: 12px; width: 273px; height: 64px; }
.bell { margin: 6px 36px 0 auto; height: 54px; }
.avatar { width: 64px; height: 64px; border: 1px solid #306fe8; border-radius: 50%; background: #e6f0fd; color: #306fe8; font-weight: 600; }
.main-nav { display: flex; gap: 33px; height: 76px; padding-left: 532px; color: #666; font-weight: 600; line-height: 82px; }
.main-nav a { display: flex; white-space: nowrap; }
.main-nav svg { margin: 27px 0 0 2px; }
.main-nav .active { color: #000; border-bottom: 6px solid #306fe8; }
.sub-nav {
  display: flex; align-items: center; gap: 80px; height: 77px; padding-left: 601px;
  background: #f5f5f5; box-shadow: 0 12px 12px -6px rgba(0, 0, 0, .13);
  color: #666; font-weight: 600;
}
.sub-nav a { display: flex; align-items: center; white-space: nowrap; }
.sub-nav .active { color: #306fe8; }
.beta { margin-left: 16px; padding: 0 25px; border-radius: 12px; background: #fef5e4; color: #dfa534; font-size: 19px; font-weight: 500; line-height: 50px; }

/* form */
.content { display: grid; grid-template-columns: 1fr 1fr; gap: 180px; padding: 80px 370px 0 258px; }
.report-head { display: flex; align-items: center; height: 32px; padding-left: 5px; }
.icon-btn { display: flex; }
h1 { margin: 0 20px 0 32px; font-size: 25px; font-weight: 500; line-height: 32px; }
.fields { display: flex; flex-direction: column; gap: 29px; padding: 51px 0 0 13px; }
.label-row { display: flex; align-items: flex-end; height: 32px; margin-bottom: 10px; color: #4a4a4a; font-size: 25px; line-height: 32px; font-weight: 500; }
.credits { margin-left: 8px; color: #757575; font-size: 19px; font-weight: 400; }
.select { position: relative; height: 77px; }
.select select { width: 100%; height: 100%; padding: 0 80px 0 24px; border: 0; border-radius: 12px; appearance: none; background: #e6f0fd; color: #2f64d6; font-weight: 500; }
.select .chev { position: absolute; right: 36px; top: 26px; color: #2f64d6; }
.hint { margin: 5px 0 0 7px; font-size: 19px; line-height: 28px; }
.tags { display: flex; align-items: center; gap: 13px; height: 79px; padding: 0 19px; border: 1px solid #999; border-radius: 12px; }
.tag { display: flex; align-items: center; gap: 39px; height: 52px; padding: 0 12px 0 27px; border: 1px solid #5a12dc; border-radius: 11px; background: #ece4fb; color: #4f4b57; font-size: 19px; font-weight: 500; }
.tag button { display: flex; }
.tags input { flex: 1; min-width: 0; border: 0; outline: 0; background: none; }
.units { display: flex; width: 157px; height: 43px; margin-left: auto; border: 1px solid #306fe8; border-radius: 12px; overflow: hidden; color: #306fe8; font-size: 20px; font-weight: 400; line-height: 41px; text-align: center; }
.units label { position: relative; flex: 1; }
.units label:last-child { flex: 0 0 75px; }
.units input { position: absolute; inset: 0; width: 100%; height: 100%; opacity: 0; }
.units span { display: block; }
.units input:checked + span { background: #306fe8; color: #fff; }
.submit { position: relative; width: 353px; margin: 40px 0 0 auto; }
.submit::after { content: ""; position: absolute; inset: -16px -66px -3px -65px; border: 5px solid #ea3f25; pointer-events: none; }
.generate { display: block; width: 100%; height: 74px; }

/* map */
h2 { height: 58px; font-size: 19px; font-weight: 400; line-height: 36px; }
.map { position: relative; height: 870px; border-radius: 10px; overflow: hidden; font-family: Roboto, "Liberation Sans", sans-serif; }
.layer { position: absolute; inset: 0; width: 100%; height: 100%; }
.street { fill: none; stroke: #dce0e8; stroke-width: 4; }
.green { fill: #cbefd7; }
.water { fill: #9fd8ea; }
.river { fill: none; stroke: #9fd8ea; stroke-width: 7; }
.inlet { fill: none; stroke: #9fd8ea; stroke-width: 34; stroke-linejoin: round; }
.wake { fill: none; stroke: #74c1dc; stroke-width: 3; stroke-dasharray: 20 9; }
.ferry { fill: none; stroke: #5f6b7a; stroke-width: 3; stroke-dasharray: 10 8; }
.road-case { fill: none; stroke: #8493bf; stroke-width: 16; stroke-linejoin: round; stroke-linecap: round; }
.road-fill { fill: none; stroke: #abb7d5; stroke-width: 11; stroke-linejoin: round; stroke-linecap: round; }
.labels text { paint-order: stroke; stroke: #fff; stroke-width: 4px; stroke-linejoin: round; fill: #3e4145; }
.town text { font-size: 19px; }
.labels .city { font-size: 25px; font-weight: 500; }
.labels .metro { font-size: 42px; font-weight: 500; fill: #2c2e33; }
.labels .borough { font-size: 20px; font-weight: 500; letter-spacing: 1px; }
.area text { font-size: 15px; font-weight: 500; letter-spacing: 1px; }
.state text { font-size: 19px; font-weight: 500; }
.labels .stream text { font-size: 18px; fill: #3d8ba1; stroke: none; }
.labels .park text { font-size: 21px; fill: #3d8f63; }
.labels .airport text { font-size: 21px; fill: #3568d4; }
.labels .roadname text { font-size: 18px; fill: #3f4a66; }
.labels .num text { font-size: 15px; font-weight: 500; text-anchor: middle; stroke: none; }
.labels .inum text { font-size: 15px; font-weight: 700; text-anchor: middle; stroke: none; fill: #fff; }
.labels .google { font-size: 29px; font-weight: 500; }
.labels .google tspan { stroke: #fff; }
.pins { position: absolute; left: 217px; top: 149px; display: grid; grid-template-columns: repeat(7, 64px); justify-content: space-between; align-content: space-between; width: 510px; height: 508px; }
.pins span { height: 64px; border: 8px solid #1c1c1c; border-radius: 50%; background: #fff; color: #000; font-size: 20px; line-height: 48px; text-align: center; }
.map-btn { position: absolute; right: 16px; display: grid; place-items: center; width: 64px; height: 64px; background: #fff; box-shadow: 0 1px 6px rgba(0, 0, 0, .25); }
.full { top: 16px; border-radius: 4px; }
.camera { bottom: 38px; border-radius: 50%; }
.credits-bar { position: absolute; right: 0; bottom: 0; display: flex; gap: 19px; height: 22px; padding: 0 10px 0 4px; background: rgba(247, 247, 247, .8); color: #000; font-size: 16px; line-height: 24px; white-space: nowrap; }
.credits-bar button { line-height: 24px; }

.chat { position: fixed; right: 44px; bottom: 176px; height: 96px; }
.page-fade { position: fixed; left: 0; right: 0; bottom: 0; height: 80px; background: linear-gradient(rgba(0, 0, 0, 0), rgba(0, 0, 0, .03) 50%, rgba(0, 0, 0, .1)); pointer-events: none; }
```
